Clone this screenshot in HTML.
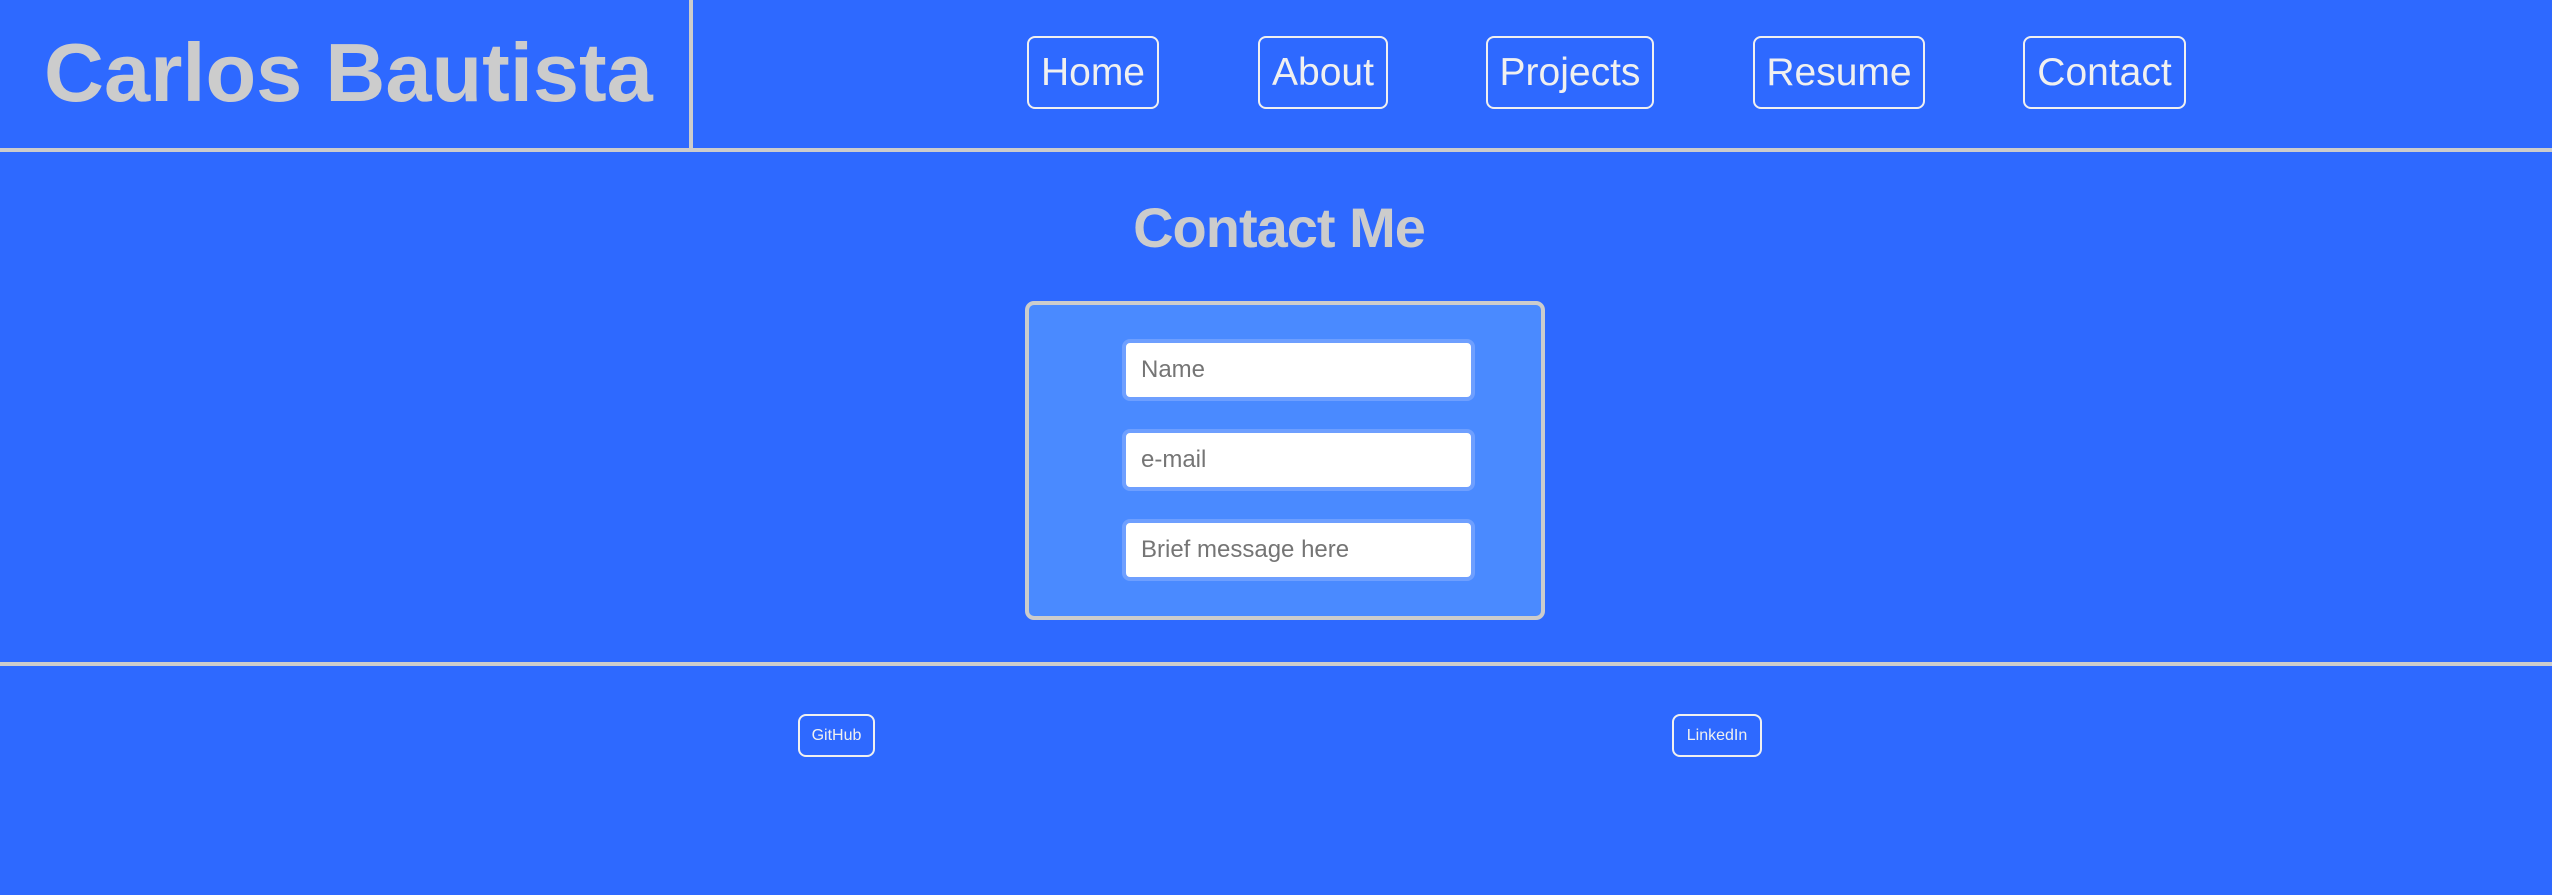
<!DOCTYPE html>
<html><head><style>
*{margin:0;padding:0;box-sizing:border-box}
body{width:2552px;height:895px;background:#2e69ff;position:relative;overflow:hidden;font-family:"Liberation Sans",Arial,sans-serif}
.abs{position:absolute}
.title{left:44px;top:18px;font-size:83px;font-weight:bold;color:#cccccc;line-height:110px;white-space:nowrap;letter-spacing:0px}
.vdiv{left:689px;top:0;width:4px;height:150px;background:#cccccc}
.hline{left:0;width:2552px;height:4px;background:#cccccc}
.nav{top:36px;height:73px;border:2px solid #f0f0f0;border-radius:8px;color:#f0f0f0;font-size:39px;display:flex;align-items:center;justify-content:center}
h1{position:absolute;left:0;width:2558px;text-align:center;top:196px;font-size:56px;color:#cccccc;font-weight:bold;line-height:64px;font-family:"Liberation Sans",sans-serif;letter-spacing:-1px}
.form{left:1025px;top:301px;width:520px;height:319px;background:#4a8aff;border:4px solid #cccccc;border-radius:9px}
.inp{left:1122px;width:353px;height:62px;border:4px solid #6e9fff;border-radius:8px;background:#fff;color:#757575;font-size:24px;padding-left:15px;display:flex;align-items:center}
.fb{top:714px;height:43px;border:2px solid #f0f0f0;border-radius:8px;color:#f0f0f0;font-size:16px;display:flex;align-items:center;justify-content:center}
</style></head><body>
<div class="abs title">Carlos Bautista</div>
<div class="abs vdiv"></div>
<div class="abs hline" style="top:148px"></div>
<div class="abs nav" style="left:1027px;width:132px">Home</div>
<div class="abs nav" style="left:1258px;width:130px">About</div>
<div class="abs nav" style="left:1486px;width:168px">Projects</div>
<div class="abs nav" style="left:1753px;width:172px">Resume</div>
<div class="abs nav" style="left:2023px;width:163px">Contact</div>
<h1>Contact Me</h1>
<div class="abs form"></div>
<div class="abs inp" style="top:339px">Name</div>
<div class="abs inp" style="top:429px">e-mail</div>
<div class="abs inp" style="top:519px">Brief message here</div>
<div class="abs hline" style="top:662px"></div>
<div class="abs fb" style="left:798px;width:77px">GitHub</div>
<div class="abs fb" style="left:1672px;width:90px">LinkedIn</div>
</body></html>
